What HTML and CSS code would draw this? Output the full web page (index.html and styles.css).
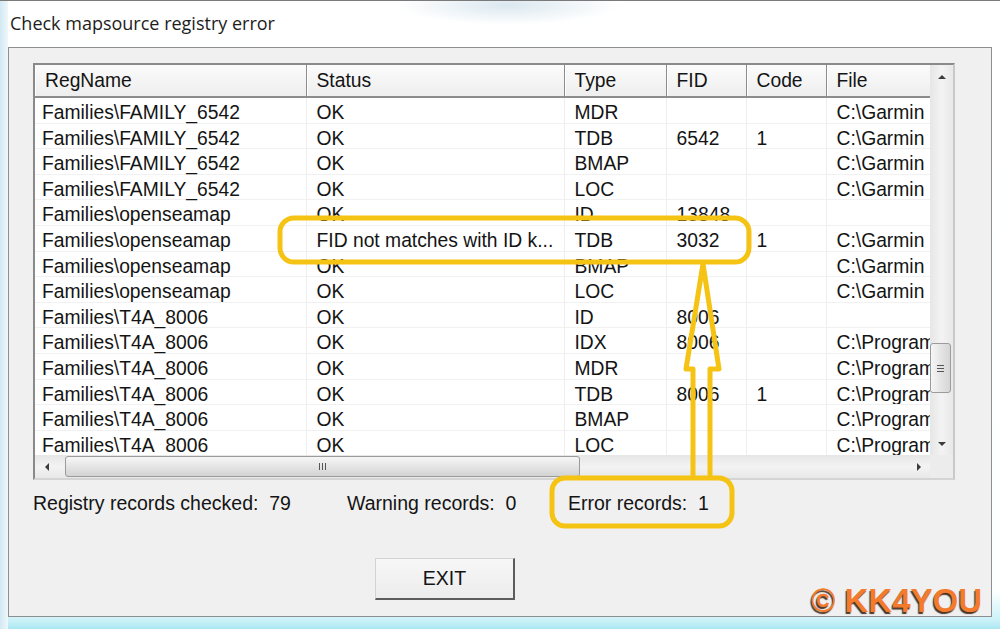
FILE: index.html
```html
<!DOCTYPE html>
<html lang="en">
<head>
    <meta charset="UTF-8">
    <title>Check mapsource registry error</title>
    <link rel="stylesheet" href="styles.css">
</head>
<body>
    <div class="window">
        <div class="title-bar">Check mapsource registry error</div>

        <div class="client">
            <div class="list-view">
                <div class="list-body">
                    <table class="records">
                        <colgroup>
                            <col class="col-name">
                            <col class="col-status">
                            <col class="col-type">
                            <col class="col-fid">
                            <col class="col-code">
                            <col class="col-file">
                        </colgroup>
                        <thead>
                            <tr>
                                <th>RegName</th>
                                <th>Status</th>
                                <th>Type</th>
                                <th>FID</th>
                                <th>Code</th>
                                <th>File</th>
                            </tr>
                        </thead>
                        <tbody>
                            <tr><td>Families\FAMILY_6542</td><td>OK</td><td>MDR</td><td></td><td></td><td>C:\Garmin</td></tr>
                            <tr><td>Families\FAMILY_6542</td><td>OK</td><td>TDB</td><td>6542</td><td>1</td><td>C:\Garmin</td></tr>
                            <tr><td>Families\FAMILY_6542</td><td>OK</td><td>BMAP</td><td></td><td></td><td>C:\Garmin</td></tr>
                            <tr><td>Families\FAMILY_6542</td><td>OK</td><td>LOC</td><td></td><td></td><td>C:\Garmin</td></tr>
                            <tr><td>Families\openseamap</td><td>OK</td><td>ID</td><td>13848</td><td></td><td></td></tr>
                            <tr><td>Families\openseamap</td><td>FID not matches with ID k...</td><td>TDB</td><td>3032</td><td>1</td><td>C:\Garmin</td></tr>
                            <tr><td>Families\openseamap</td><td>OK</td><td>BMAP</td><td></td><td></td><td>C:\Garmin</td></tr>
                            <tr><td>Families\openseamap</td><td>OK</td><td>LOC</td><td></td><td></td><td>C:\Garmin</td></tr>
                            <tr><td>Families\T4A_8006</td><td>OK</td><td>ID</td><td>8006</td><td></td><td></td></tr>
                            <tr><td>Families\T4A_8006</td><td>OK</td><td>IDX</td><td>8006</td><td></td><td>C:\Program Files</td></tr>
                            <tr><td>Families\T4A_8006</td><td>OK</td><td>MDR</td><td></td><td></td><td>C:\Program Files</td></tr>
                            <tr><td>Families\T4A_8006</td><td>OK</td><td>TDB</td><td>8006</td><td>1</td><td>C:\Program Files</td></tr>
                            <tr><td>Families\T4A_8006</td><td>OK</td><td>BMAP</td><td></td><td></td><td>C:\Program Files</td></tr>
                            <tr><td>Families\T4A_8006</td><td>OK</td><td>LOC</td><td></td><td></td><td>C:\Program Files</td></tr>
                        </tbody>
                    </table>
                </div>

                <div class="vscroll">
                    <span class="scroll-btn"><span class="tri tri-up"></span></span>
                    <div class="vtrack">
                        <span class="vthumb"><span class="grip-h"></span></span>
                    </div>
                    <span class="scroll-btn"><span class="tri tri-down"></span></span>
                </div>

                <div class="hscroll">
                    <span class="scroll-btn"><span class="tri tri-left"></span></span>
                    <div class="htrack">
                        <span class="hthumb"><span class="grip-v"></span></span>
                    </div>
                    <span class="scroll-btn"><span class="tri tri-right"></span></span>
                </div>

                <div class="corner"></div>
            </div>

            <div class="summary">
                <span class="stat stat-checked">Registry records checked:&nbsp; 79</span>
                <span class="stat stat-warning">Warning records:&nbsp; 0</span>
                <span class="stat">Error records:&nbsp; 1</span>
            </div>

            <button class="exit-button" type="button">EXIT</button>
        </div>

        <!-- yellow hand-drawn markup on top of the dialog -->
        <svg class="markup" width="1000" height="629" viewBox="0 0 1000 629">
            <rect x="280" y="217" width="469" height="44" rx="14" ry="14"/>
            <rect x="552" y="477" width="180" height="48" rx="13" ry="13"/>
            <path d="M693 477 L693 368 L686 368 L703 263 L719 368 L710 368 L710 477"/>
        </svg>

        <div class="watermark">© KK4YOU</div>
    </div>
</body>
</html>
```

FILE: styles.css
```css
* {
    margin: 0;
    padding: 0;
    box-sizing: border-box;
}

body {
    width: 1000px;
    height: 629px;
    overflow: hidden;
    font-family: 'Liberation Sans', Arial, sans-serif;
    color: #141414;
    background: #fff;
}

.window {
    position: relative;
    width: 1000px;
    height: 629px;
    padding: 0 8px;
    border-top: 1px solid #7a7a7a;
    background:
        linear-gradient(90deg, #d3e9f4 0, #eef7fb 8px, transparent 8px),
        linear-gradient(180deg, #ffffff 0, #fdffff 590px, #c9f1f8 620px, #a6e5f0 629px);
}

.title-bar {
    height: 46px;
    padding-left: 2px;
    font-family: 'Open Sans', 'Liberation Sans', sans-serif;
    font-size: 18px;
    line-height: 45px;
    color: #1d1d1d;
    background: radial-gradient(ellipse 110px 20px at 500px 4px, rgba(175, 203, 220, 0.45), rgba(255, 255, 255, 0));
}

.client {
    height: 570px;
    background: #f0f0f0;
    border: 1px solid #8c8e90;
}

/* list view */
.list-view {
    margin: 15px 0 0 24px;
    width: 922px;
    height: 417px;
    display: grid;
    grid-template-columns: 895px 23px;
    grid-template-rows: 390px 23px;
    border: 2px solid #8a8a8a;
    border-right-color: #c9c9c9;
    border-bottom-color: #d4d4d4;
    background: #fff;
}

.list-body {
    overflow: hidden;
    background: #fff;
}

.records {
    width: 895px;
    table-layout: fixed;
    border-collapse: collapse;
    font-size: 19.3px;
}

.col-name { width: 271px; }
.col-status { width: 258px; }
.col-type { width: 102px; }
.col-fid { width: 80px; }
.col-code { width: 80px; }
.col-file { width: 104px; }

.records th {
    height: 32px;
    padding: 1px 0 0 10px;
    text-align: left;
    font-weight: normal;
    background: linear-gradient(#fbfbfb, #eeeeee);
    border-right: 1px solid #8c8c8c;
    border-bottom: 2px solid #8c8c8c;
    box-shadow: inset 1px 0 0 #ffffff;
    white-space: nowrap;
}

.records th:last-child {
    border-right: none;
}

.records td {
    padding: 5px 0 0 10px;
    white-space: nowrap;
    line-height: 19.6px;
    border-right: 1px solid #eeeeee;
    border-bottom: 1px solid #f1f1f1;
}

.records td:first-child {
    padding-left: 7px;
}

.records td:last-child {
    overflow: hidden;
}

/* scroll bars */
.vscroll {
    display: flex;
    flex-direction: column;
    background: linear-gradient(90deg, #e6e6e6, #f3f3f3 50%, #e8e8e8);
}

.hscroll {
    display: flex;
    background: linear-gradient(#e6e6e6, #f3f3f3 50%, #e8e8e8);
}

.scroll-btn {
    width: 23px;
    height: 23px;
    flex: none;
    display: flex;
    align-items: center;
    justify-content: center;
}

.tri {
    width: 0;
    height: 0;
    border: 4px solid transparent;
}

.tri-up { border-bottom: 4px solid #3c3c3c; border-top: 0; }
.tri-down { border-top: 4px solid #3c3c3c; border-bottom: 0; }
.tri-left { border-right: 4px solid #3c3c3c; border-left: 0; }
.tri-right { border-left: 4px solid #3c3c3c; border-right: 0; }

.vtrack {
    flex: 1;
}

.vthumb {
    display: flex;
    align-items: center;
    justify-content: center;
    width: 21px;
    height: 50px;
    margin: 255px 0 0 0;
    border: 1px solid #9b9b9b;
    border-radius: 3px;
    background: linear-gradient(90deg, #f6f6f6, #e3e3e3 55%, #d6d6d6);
}

.grip-h {
    width: 7px;
    height: 7px;
    border-top: 1px solid #555;
    border-bottom: 1px solid #555;
    background: linear-gradient(#555, #555) center / 100% 1px no-repeat;
}

.htrack {
    flex: 1;
}

.hthumb {
    display: flex;
    align-items: center;
    justify-content: center;
    width: 515px;
    height: 21px;
    margin: 1px 0 0 7px;
    border: 1px solid #9b9b9b;
    border-radius: 3px;
    background: linear-gradient(#f6f6f6, #e3e3e3 55%, #d3d3d3);
}

.grip-v {
    width: 7px;
    height: 7px;
    border-left: 1px solid #555;
    border-right: 1px solid #555;
    background: linear-gradient(#555, #555) center / 1px 100% no-repeat;
}

.corner {
    background: #ececec;
}

/* totals under the list */
.summary {
    display: flex;
    margin-top: 12px;
    padding-left: 24px;
    height: 22px;
    line-height: 22px;
    font-size: 19.5px;
    white-space: nowrap;
}

.stat-checked {
    width: 314px;
}

.stat-warning {
    width: 221px;
}

.exit-button {
    display: block;
    width: 140px;
    height: 42px;
    margin: 44px 0 0 366px;
    font-family: 'Liberation Sans', Arial, sans-serif;
    font-size: 19.5px;
    color: #141414;
    background: linear-gradient(#f7f7f7, #ececec);
    border: 1px solid #d2d2d2;
    border-right: 2px solid #5c5c5c;
    border-bottom: 2px solid #5c5c5c;
}

/* overlays */
.markup {
    position: absolute;
    top: 0;
    left: 0;
    pointer-events: none;
}

.markup rect,
.markup path {
    fill: none;
    stroke: #f5c313;
    stroke-width: 5;
    stroke-linejoin: round;
}

.watermark {
    position: absolute;
    left: 811px;
    top: 580px;
    font-family: 'Liberation Sans', Arial, sans-serif;
    font-weight: bold;
    font-size: 33px;
    line-height: 40px;
    color: #f47a2c;
    text-shadow: -1px 2px 1px #4a3526;
}
```
